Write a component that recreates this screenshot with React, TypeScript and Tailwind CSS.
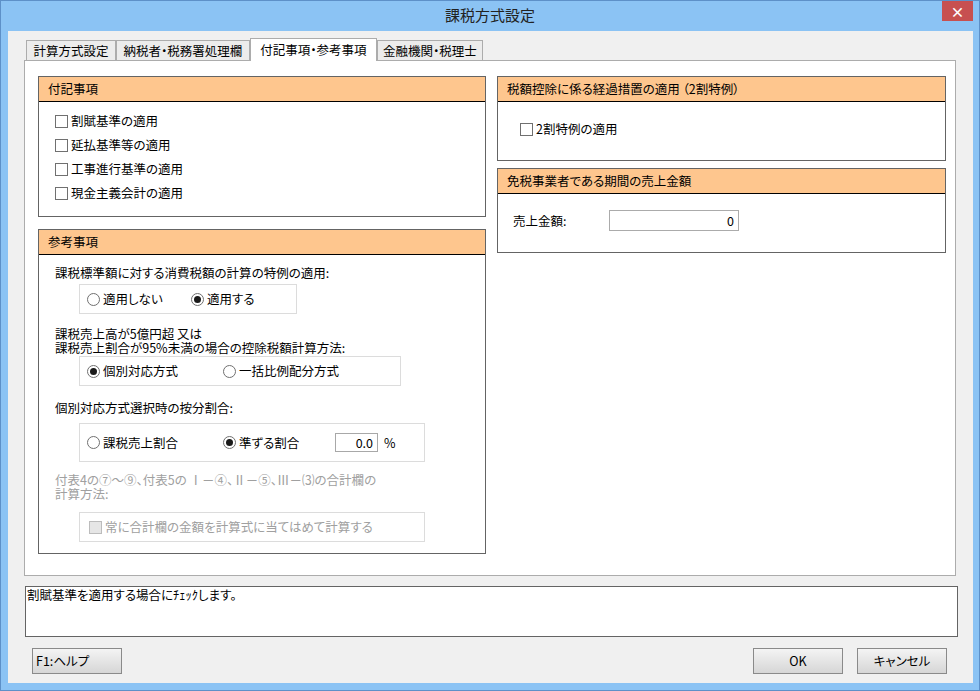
import React from 'react';

// チェックボックス（無効状態はグレー）
const Check = ({ disabled = false }: { disabled?: boolean }) => (
  <span
    className={`inline-block w-[13px] h-[13px] shrink-0 border ${
      disabled ? 'border-[#bcbcbc] bg-[#e6e6e6]' : 'border-[#707070] bg-white'
    }`}
  />
);

const Radio = ({ checked = false }: { checked?: boolean }) => (
  <span className="w-[13px] h-[13px] shrink-0 rounded-full border border-[#707070] bg-white flex items-center justify-center">
    {checked && <span className="w-[7px] h-[7px] rounded-full bg-[#1a1a1a]" />}
  </span>
);

const Section = ({
  title,
  className,
  children,
}: {
  title: string;
  className: string;
  children: React.ReactNode;
}) => (
  <div className={`border border-[#646464] bg-white ${className}`}>
    <div className="h-[25px] bg-[#fec68e] border-b border-black pl-[9px] flex items-center leading-[16px]">
      {title}
    </div>
    {children}
  </div>
);

const Tab = ({ label, width, active = false }: { label: string; width: string; active?: boolean }) =>
  active ? (
    <div
      className={`${width} h-[23px] -mb-px relative z-10 bg-white border-t border-x border-[#acacac] flex items-center justify-center leading-[16px]`}
    >
      {label}
    </div>
  ) : (
    <div
      className={`${width} h-[20px] bg-[#ececec] border-t border-x border-[#acacac] flex items-center justify-center leading-[16px]`}
    >
      {label}
    </div>
  );

const Button = ({ label, left = false }: { label: string; left?: boolean }) => (
  <button
    type="button"
    className={`w-[90px] h-[26px] border border-[#8a8a8a] bg-linear-to-b from-[#f4f4f4] to-[#d6d6d6] flex items-center leading-[16px] ${
      left ? 'justify-start pl-[3px]' : 'justify-center'
    }`}
  >
    {label}
  </button>
);

export default function App() {
  const furokuItems = ['割賦基準の適用', '延払基準等の適用', '工事進行基準の適用', '現金主義会計の適用'];

  return (
    <div className="w-[980px] h-[691px] border border-[#5d90c8] bg-[#8bc3f4] flex flex-col text-[12.5px] text-black font-['Noto_Sans_CJK_JP',sans-serif] [font-feature-settings:'palt']">
      {/* タイトルバー */}
      <div className="h-[30px] grid grid-cols-[1fr_auto_1fr]">
        <div />
        <div className="flex items-center text-[15px] text-[#222] pb-[2px] [font-feature-settings:normal]">
          課税方式設定
        </div>
        <div className="flex justify-end items-start pr-[6px]">
          <div className="w-[31px] h-[20px] bg-[#c75050] flex items-center justify-center text-white text-[14px] font-bold leading-none">
            ×
          </div>
        </div>
      </div>

      {/* クライアント領域 */}
      <div className="ml-[7px] mr-[6px] mb-[7px] h-[652px] bg-[#f0f0f0] flex flex-col pt-[7px]">
        <div className="flex items-end h-[22px] ml-[18px]">
          <Tab label="計算方式設定" width="w-[90px]" />
          <Tab label="納税者・税務署処理欄" width="w-[134px]" />
          <Tab label="付記事項・参考事項" width="w-[127px]" active />
          <Tab label="金融機関・税理士" width="w-[106px]" />
        </div>

        <div className="ml-[16px] w-[932px] h-[516px] border border-[#acacac] bg-white flex gap-[11px] pl-[13px] pt-[15px]">
          {/* 左列 */}
          <div className="w-[448px] flex flex-col">
            <Section title="付記事項" className="h-[141px]">
              <div className="pt-[7px] pl-[16px]">
                {furokuItems.map((t) => (
                  <div key={t} className="h-[24px] flex items-center gap-[3px] leading-[16px]">
                    <Check />
                    {t}
                  </div>
                ))}
              </div>
            </Section>

            <Section title="参考事項" className="h-[325px] mt-[12px]">
              <div className="pl-[16px] flex flex-col">
                <div className="mt-[10px] leading-[16px]">課税標準額に対する消費税額の計算の特例の適用:</div>
                <div className="mt-[3px] ml-[24px] w-[218px] h-[30px] border border-[#dcdcdc] flex items-center pl-[7px] leading-[16px]">
                  <span className="w-[104px] flex items-center gap-[3px]">
                    <Radio />
                    適用しない
                  </span>
                  <span className="flex items-center gap-[3px]">
                    <Radio checked />
                    適用する
                  </span>
                </div>

                <div className="mt-[13px] leading-[14px]">
                  <div>課税売上高が5億円超 又は</div>
                  <div>課税売上割合が95%未満の場合の控除税額計算方法:</div>
                </div>
                <div className="mt-[1px] ml-[24px] w-[322px] h-[30px] border border-[#dcdcdc] flex items-center pl-[7px] leading-[16px]">
                  <span className="w-[136px] flex items-center gap-[3px]">
                    <Radio checked />
                    個別対応方式
                  </span>
                  <span className="flex items-center gap-[3px]">
                    <Radio />
                    一括比例配分方式
                  </span>
                </div>

                <div className="mt-[14px] leading-[16px]">個別対応方式選択時の按分割合:</div>
                <div className="mt-[7px] ml-[24px] w-[346px] h-[39px] border border-[#dcdcdc] flex items-center pl-[7px] leading-[16px]">
                  <span className="w-[136px] flex items-center gap-[3px]">
                    <Radio />
                    課税売上割合
                  </span>
                  <span className="w-[112px] flex items-center gap-[3px]">
                    <Radio checked />
                    準ずる割合
                  </span>
                  <span className="w-[43px] h-[19px] border border-[#a8a8a8] flex items-center justify-end pr-[4px]">
                    0.0
                  </span>
                  <span className="ml-[6px]">%</span>
                </div>

                <div className="mt-[11px] leading-[14px] text-[#a0a0a0]">
                  <div>付表4の⑦～⑨、付表5の Ⅰ－④、Ⅱ－⑤、Ⅲ－⑶の合計欄の</div>
                  <div>計算方法:</div>
                </div>
                <div className="mt-[11px] ml-[24px] w-[346px] h-[30px] border border-[#dcdcdc] flex items-center pl-[9px] gap-[3px] leading-[16px] text-[#a0a0a0]">
                  <Check disabled />
                  常に合計欄の金額を計算式に当てはめて計算する
                </div>
              </div>
            </Section>
          </div>

          {/* 右列 */}
          <div className="w-[449px] flex flex-col">
            <Section title="税額控除に係る経過措置の適用 （2割特例）" className="h-[85px]">
              <div className="mt-[15px] pl-[22px] h-[24px] flex items-center gap-[3px] leading-[16px]">
                <Check />
                2割特例の適用
              </div>
            </Section>

            <Section title="免税事業者である期間の売上金額" className="h-[85px] mt-[7px]">
              <div className="mt-[16px] pl-[15px] flex items-center leading-[16px]">
                <span className="w-[96px]">売上金額:</span>
                <span className="w-[130px] h-[21px] border border-[#ababab] flex items-center justify-end pr-[4px]">
                  0
                </span>
              </div>
            </Section>
          </div>
        </div>

        {/* 説明欄 */}
        <div className="mt-[10px] ml-[17px] w-[933px] h-[51px] border border-[#646464] bg-white pl-[1px] leading-[15px]">
          割賦基準を適用する場合にﾁｪｯｸします。
        </div>

        {/* ボタン */}
        <div className="mt-[11px] flex items-center pl-[24px] pr-[26px]">
          <Button label="F1:ヘルプ" left />
          <div className="flex-1" />
          <Button label="OK" />
          <div className="w-[14px]" />
          <Button label="キャンセル" />
        </div>
      </div>
    </div>
  );
}
